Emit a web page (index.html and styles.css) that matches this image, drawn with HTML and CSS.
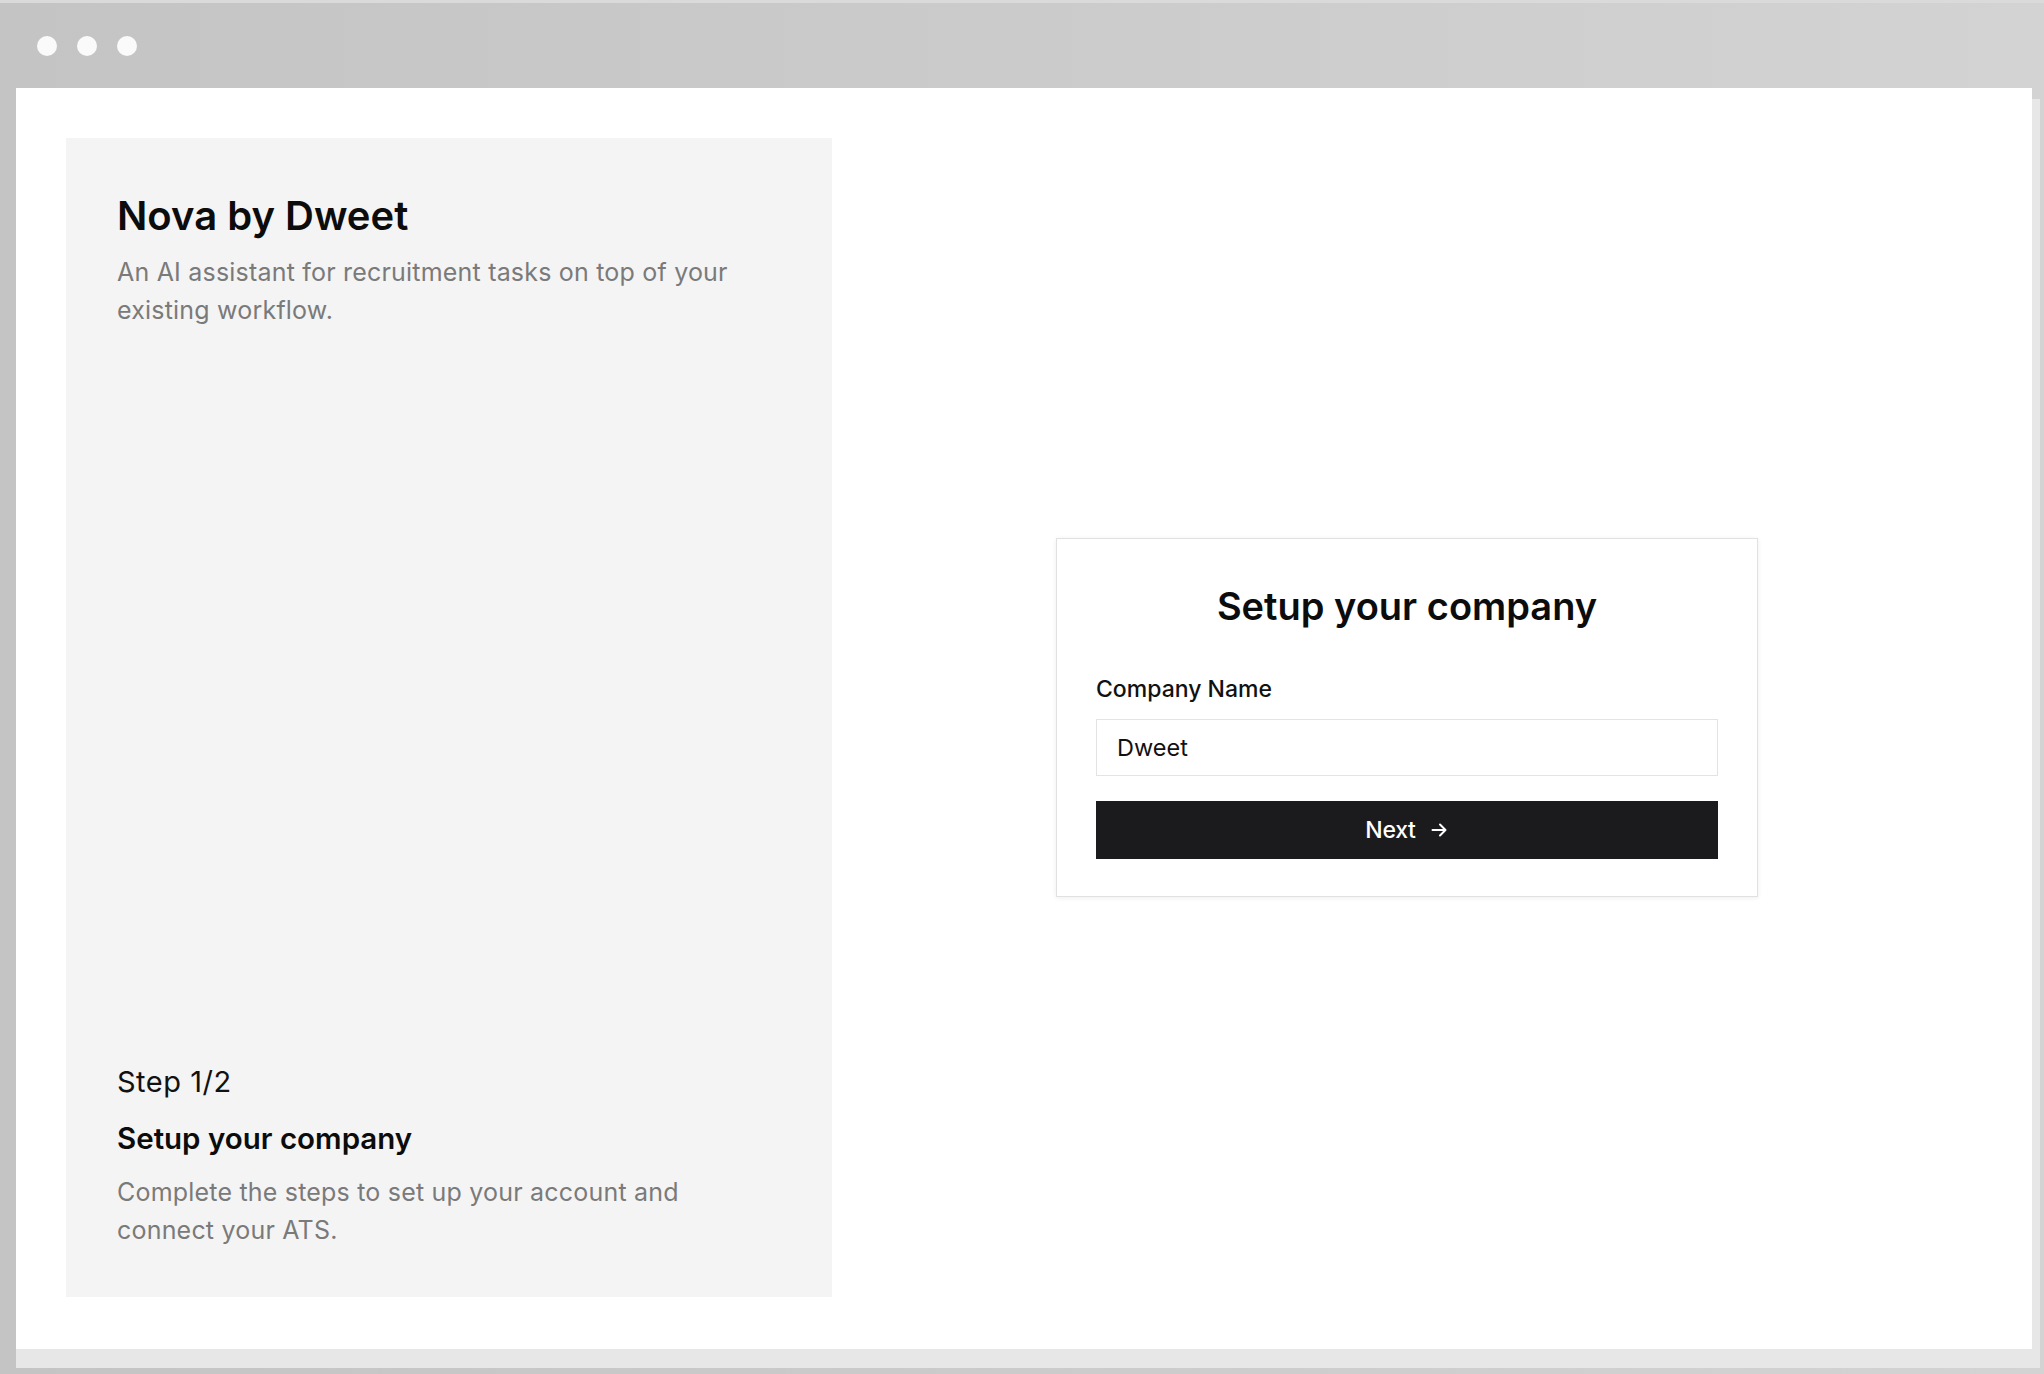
FILE: index.html
```html
<!DOCTYPE html>
<html lang="en">
<head>
<meta charset="utf-8">
<title>Nova by Dweet – Setup</title>
<link rel="stylesheet" href="styles.css">
</head>
<body>
<div class="window">
  <div class="titlebar">
    <span class="dot"></span><span class="dot"></span><span class="dot"></span>
  </div>
  <div class="viewport">
    <aside class="panel">
      <div class="panel-top">
        <h1 class="brand">Nova by Dweet</h1>
        <p class="muted">An AI assistant for recruitment tasks on top of your existing workflow.</p>
      </div>
      <div class="panel-bottom">
        <div class="step">Step 1/2</div>
        <h2 class="step-title">Setup your company</h2>
        <p class="muted step-desc">Complete the steps to set up your account and connect your ATS.</p>
      </div>
    </aside>
    <main class="main">
      <form class="card">
        <h2 class="card-title">Setup your company</h2>
        <label class="label" for="company">Company Name</label>
        <div class="input" id="company">Dweet</div>
        <button type="button" class="btn">Next
          <svg class="arrow" width="20" height="20" viewBox="0 0 20 20" fill="none" stroke="#fff" stroke-width="2" stroke-linecap="round" stroke-linejoin="round"><path d="M3.5 10h13M11 4.5l5.5 5.5-5.5 5.5"/></svg>
        </button>
      </form>
    </main>
  </div>
</div>
</body>
</html>
```
FILE: styles.css
```css
* { box-sizing: border-box; }
html, body { margin: 0; padding: 0; }
body {
  width: 2044px;
  height: 1374px;
  overflow: hidden;
  background: linear-gradient(to bottom, #cfcfcf 0, #cfcfcf 1362px, #c6c6c6 1366px, #c4c4c4 100%);
  font-family: "Inter", "Liberation Sans", sans-serif;
  color: #0f0f10;
}
.window {
  height: 1374px;
  display: flex;
  flex-direction: column;
  background: linear-gradient(to right, #c4c4c4 0%, #cbcbcb 50%, #d3d3d3 100%);
  border-top: 3px solid #dadada;
}
.titlebar {
  height: 85px;
  flex: none;
  display: flex;
  align-items: center;
  gap: 20px;
  padding: 0 0 0 37px;
}
.dot {
  width: 20px;
  height: 20px;
  border-radius: 50%;
  background: #fafafa;
}
.viewport {
  flex: none;
  height: 1261px;
  margin: 0 12px 0 16px;
  background: #fff;
  box-shadow: 4px 15px 0 4px #e7e7e7;
  padding: 50px 50px 52px 50px;
  display: grid;
  grid-template-columns: 766px 1fr;
}
.panel {
  background: #f4f4f4;
  padding: 54px 52px 48px 51px;
  display: flex;
  flex-direction: column;
  justify-content: space-between;
}
.brand {
  margin: 0;
  font-size: 40px;
  line-height: 47px;
  font-weight: 600;
  letter-spacing: 0;
  color: #0c0c0c;
}
.muted {
  margin: 14px 0 0;
  max-width: 630px;
  font-size: 25px;
  line-height: 38px;
  font-weight: 400;
  color: #7a7a7a;
  letter-spacing: 0.2px;
}
.step {
  font-size: 29px;
  line-height: 34px;
  color: #111;
  letter-spacing: 0.5px;
}
.step-title {
  margin: 21px 0 0;
  font-size: 29.5px;
  line-height: 36px;
  font-weight: 600;
  letter-spacing: 0;
  color: #0c0c0c;
}
.muted.step-desc { margin-top: 17px; }
.main {
  display: flex;
  align-items: center;
  justify-content: center;
}
.card {
  width: 702px;
  border: 1px solid #e1e1e1;
  box-shadow: 0 1px 5px rgba(0,0,0,0.07);
  background: #fff;
  padding: 44px 39px 37px 39px;
  display: flex;
  flex-direction: column;
}
.card-title {
  margin: 0;
  text-align: center;
  font-size: 38px;
  line-height: 46px;
  font-weight: 600;
  letter-spacing: 0;
  color: #0c0c0c;
}
.label {
  margin-top: 46px;
  font-size: 23px;
  line-height: 28px;
  font-weight: 500;
  letter-spacing: 0;
  color: #111;
}
.input {
  margin-top: 16px;
  height: 57px;
  border: 1px solid #e3e3e3;
  padding: 0 20px;
  display: flex;
  align-items: center;
  font-size: 23.5px;
  letter-spacing: 0;
  color: #111;
}
.btn {
  margin-top: 25px;
  height: 58px;
  border: none;
  background: #1b1b1d;
  color: #fff;
  font-family: inherit;
  font-size: 23px;
  font-weight: 500;
  letter-spacing: -0.3px;
  display: flex;
  align-items: center;
  justify-content: center;
  gap: 13px;
  padding: 0;
}
.arrow { display: block; }
```
